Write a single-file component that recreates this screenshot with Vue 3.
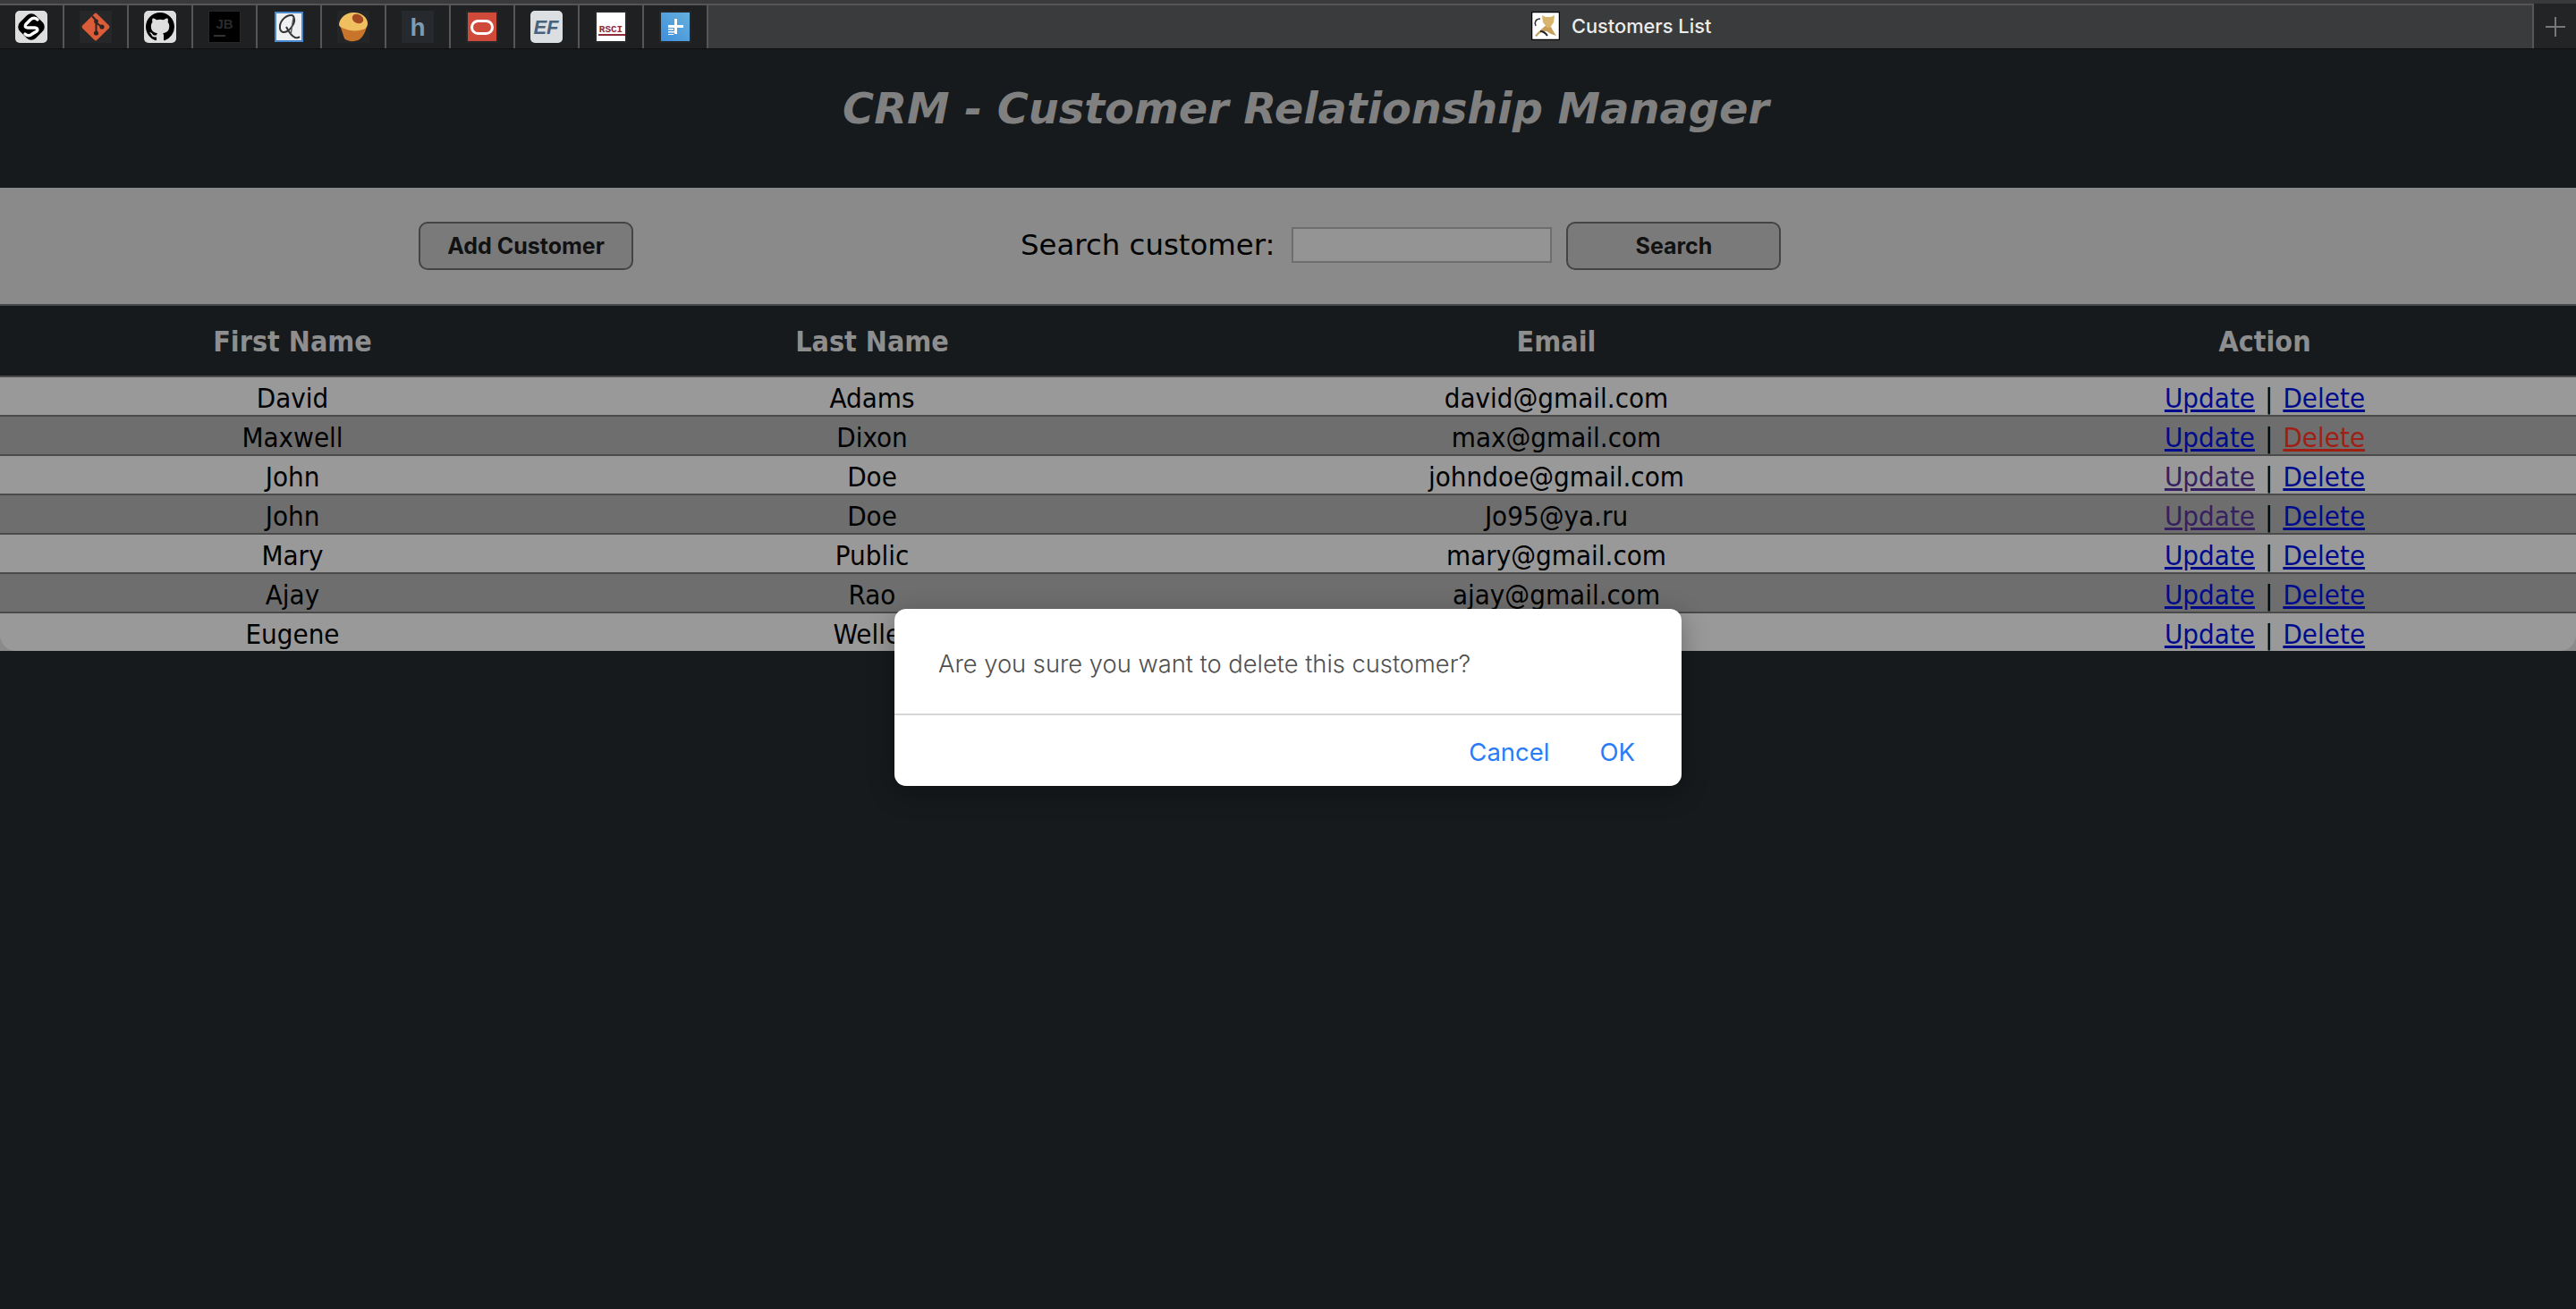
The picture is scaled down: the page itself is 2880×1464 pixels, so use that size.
<script setup>
const customers = [
  { first: 'David', last: 'Adams', email: 'david@gmail.com' },
  { first: 'Maxwell', last: 'Dixon', email: 'max@gmail.com', deleteHover: true },
  { first: 'John', last: 'Doe', email: 'johndoe@gmail.com', visited: true },
  { first: 'John', last: 'Doe', email: 'Jo95@ya.ru', visited: true },
  { first: 'Mary', last: 'Public', email: 'mary@gmail.com' },
  { first: 'Ajay', last: 'Rao', email: 'ajay@gmail.com' },
  { first: 'Eugene', last: 'Weller', email: 'eugene@gmail.com' }
]
</script>

<template>
  <div class="app">
    <div class="tabbar">
      <div class="tab">
        <svg viewBox="0 0 36 36" class="icon">
          <rect width="36" height="36" rx="5" fill="#dedede" />
          <rect x="5.500" y="5.500" width="25" height="25" rx="7" fill="#000" transform="rotate(45 18 18)" />
          <path d="M25 10Q21 6.500 17 10L12 15Q9.500 18.500 14 19H22Q26.500 19.500 24 23L19 26Q15 29.500 11 26" fill="none" stroke="#fff" stroke-width="3.400" stroke-linecap="round" />
        </svg>
      </div>
      <div class="tab">
        <svg viewBox="0 0 36 36" class="icon">
          <rect width="36" height="36" fill="#262729" />
          <rect x="6.500" y="6.500" width="23" height="23" rx="2" fill="#dc5c3a" transform="rotate(45 18 18)" />
          <path d="M14 6 18.500 11v13M18.500 13.500 25 18" fill="none" stroke="#2a2523" stroke-width="2" />
          <circle cx="18.500" cy="12" r="2.400" fill="#2a2523" />
          <circle cx="18.500" cy="25" r="2.600" fill="#2a2523" />
          <circle cx="25" cy="18" r="2.600" fill="#2a2523" />
        </svg>
      </div>
      <div class="tab">
        <svg viewBox="0 0 36 36" class="icon">
          <rect width="36" height="36" rx="5" fill="#dedede" />
          <g transform="translate(2 2)">
            <path fill="#000" d="M16 0C7.160 0 0 7.160 0 16c0 7.080 4.580 13.060 10.940 15.180.8.140 1.100-.34 1.100-.76 0-.38-.02-1.640-.02-2.980-4.020.74-5.060-.98-5.380-1.880-.18-.46-.96-1.880-1.640-2.260-.56-.3-1.360-1.040-.02-1.060 1.260-.02 2.160 1.160 2.460 1.640 1.440 2.420 3.740 1.740 4.660 1.320.14-1.040.56-1.740 1.020-2.140-3.560-.4-7.280-1.780-7.280-7.900 0-1.740.62-3.180 1.640-4.300-.16-.4-.72-2.040.16-4.240 0 0 1.340-.42 4.400 1.640 1.280-.36 2.640-.54 4-.54 1.360 0 2.720.18 4 .54 3.060-2.080 4.400-1.640 4.400-1.640.88 2.200.32 3.840.16 4.240 1.020 1.120 1.640 2.540 1.640 4.300 0 6.140-3.740 7.500-7.300 7.900.58.500 1.080 1.460 1.080 2.960 0 2.140-.02 3.860-.02 4.400 0 .42.300.92 1.100.76A16.026 16.026 0 0 0 32 16C32 7.160 24.840 0 16 0z" />
          </g>
        </svg>
      </div>
      <div class="tab">
        <svg viewBox="0 0 36 36" class="icon">
          <rect width="36" height="36" fill="#262729" />
          <rect x="1" y="1" width="34" height="34" fill="#000" />
          <text x="18" y="20" text-anchor="middle" class="jb">JB</text>
          <rect x="6" y="27" width="13" height="2" fill="#333" />
        </svg>
      </div>
      <div class="tab">
        <svg viewBox="0 0 36 36" class="icon">
          <rect x="3" y="2" width="30" height="32" fill="#eef0f2" stroke="#4a88d0" stroke-width="2" />
          <path d="M21 5C13 5 7 13 8 20c.6 4 4 5 8 3 5-3 9-10 8-14-.6-3-2-4-3-4ZM15 18c2 4 5 10 10 12 2 .6 4 0 5-1" fill="none" stroke="#333" stroke-width="2" />
          <path d="M23 8 20 27" fill="none" stroke="#555" stroke-width="1.500" />
        </svg>
      </div>
      <div class="tab">
        <svg viewBox="0 0 36 36" class="icon">
          <rect width="36" height="36" fill="#242527" />
          <path d="M3 16 8 31c4 4 12 4 17 1 4-3 7-9 8-15Z" fill="#c9742b" />
          <path d="M2 15C3 7 11 1 20 2c8 .6 14 6 14 12 0 4-2 6-5 7-6 2-15 2-21-1-3-1-6-2-6-5Z" fill="#f0c060" />
          <ellipse cx="23" cy="9" rx="6.500" ry="5" fill="#a34a22" transform="rotate(25 23 9)" />
        </svg>
      </div>
      <div class="tab">
        <svg viewBox="0 0 36 36" class="icon">
          <rect width="36" height="36" fill="#262a2e" />
          <text x="18" y="28" text-anchor="middle" class="h-mark">h</text>
        </svg>
      </div>
      <div class="tab">
        <svg viewBox="0 0 36 36" class="icon">
          <rect width="36" height="36" fill="#262729" />
          <rect x="2" y="2" width="32" height="32" fill="#cf4a38" />
          <rect x="6.500" y="11.500" width="23" height="14" rx="7" fill="none" stroke="#fff" stroke-width="3" />
        </svg>
      </div>
      <div class="tab">
        <svg viewBox="0 0 36 36" class="icon">
          <rect width="36" height="36" rx="5" fill="#dcdfe2" />
          <text x="17.500" y="26" text-anchor="middle" class="ef">EF</text>
        </svg>
      </div>
      <div class="tab">
        <svg viewBox="0 0 36 36" class="icon">
          <rect width="36" height="36" fill="#262729" />
          <rect x="2" y="2" width="32" height="32" fill="#fff" />
          <text x="18" y="24" text-anchor="middle" class="rsci">RSCI</text>
          <rect x="4" y="26" width="30" height="2" fill="#8e2c3c" />
        </svg>
      </div>
      <div class="tab">
        <svg viewBox="0 0 36 36" class="icon">
          <defs>
            <linearGradient id="blueFav" x1="0" y1="1" x2="1" y2="0">
              <stop offset="0" stop-color="#3f8fdc" />
              <stop offset="1" stop-color="#66b0dc" />
            </linearGradient>
          </defs>
          <rect width="36" height="36" fill="#262729" />
          <rect x="2" y="2" width="32" height="32" fill="url(#blueFav)" />
          <path d="M20 9v7h7v3h-7v7h-3v-7H10v-3h7V9Z" fill="#fff" />
          <path d="M10 20h6v1.500h-6ZM10 23h7v1.500h-7ZM10 26h6v1h-6Z" fill="#fff" />
        </svg>
      </div>

      <div class="active-tab">
        <svg viewBox="0 0 32 32" class="tomcat">
          <rect x="0.500" y="0.500" width="31" height="31" fill="#fff" stroke="#000" stroke-width="1.500" />
          <path d="M5 16c-2-4 0-8 5-8" fill="none" stroke="#333" stroke-width="1.500" />
          <path d="M4 27c4-5 8-8 13-12l4 0c2 4 4 8 7 12-4-1-8-3-11-5-5 0-8 2-11 6Z" fill="#c79f5c" />
          <path d="M12 4l4 2h6l4-2-1 8-4 6h-3l-5-6Z" fill="#d9b56c" />
          <path d="M10 22c3 0 6 2 8 5" fill="none" stroke="#222" stroke-width="2" />
        </svg>
        <span>Customers List</span>
      </div>
      <div class="new-tab">
        <svg viewBox="0 0 22 22" class="plus">
          <path d="M11 0v22M0 11h22" stroke="#777" stroke-width="2" />
        </svg>
      </div>
    </div>

    <div class="page">
      <h1 class="title">CRM - Customer Relationship Manager</h1>

      <div class="toolbar">
        <button class="btn">Add Customer</button>
        <label class="search-label">Search customer:</label>
        <input class="search-input" type="text" />
        <button class="btn search-btn">Search</button>
      </div>

      <div class="row head">
        <div>First Name</div>
        <div>Last Name</div>
        <div>Email</div>
        <div>Action</div>
      </div>
      <div class="rows">
        <div v-for="(c, i) in customers" :key="i" class="row item" :class="{ even: i % 2 === 1 }">
          <div>{{ c.first }}</div>
          <div>{{ c.last }}</div>
          <div>{{ c.email }}</div>
          <div>
            <a href="#" :class="{ visited: c.visited }">Update</a>
            <span class="sep">|</span>
            <a href="#" :class="{ hot: c.deleteHover }">Delete</a>
          </div>
        </div>
      </div>
    </div>

    <div class="overlay">
      <div class="dialog">
        <div class="dialog-body">Are you sure you want to delete this customer?</div>
        <div class="dialog-actions">
          <span class="dialog-btn">Cancel</span>
          <span class="dialog-btn">OK</span>
        </div>
      </div>
    </div>
  </div>
</template>

<style scoped>
.app {
  position: relative;
  width: 2880px;
  height: 1464px;
  overflow: hidden;
  background: #161a1d;
  font-family: "DejaVu Sans", sans-serif;
}
.tabbar {
  display: flex;
  height: 55px;
  box-sizing: border-box;
  background: #1f2022;
  border-top: 4px solid #3a3a3c;
  border-bottom: 1px solid #0e0f10;
  box-shadow: inset 0 2px 0 #565658;
}
.tab {
  width: 70px;
  flex: none;
  display: flex;
  align-items: center;
  justify-content: center;
  border-right: 2px solid #565658;
  padding-top: 2px;
}
.icon {
  width: 36px;
  height: 36px;
}
.jb {
  font: bold 15px "Liberation Sans", sans-serif;
  fill: #2b2b2b;
}
.h-mark {
  font: bold 28px "Liberation Sans", sans-serif;
  fill: #7d9bb2;
}
.ef {
  font: italic bold 22px "Liberation Sans", sans-serif;
  fill: #48627c;
}
.rsci {
  font: bold 11px "Liberation Mono", monospace;
  fill: #8e2c3c;
}
.active-tab {
  flex: 1;
  display: flex;
  align-items: center;
  background: #3a3b3d;
  padding-left: 920px;
  box-shadow: inset 0 2px 0 #565658;
  color: #ececec;
  font: 500 21.800px Inter, sans-serif;
}
.tomcat {
  width: 32px;
  height: 32px;
  margin-right: 13px;
}
.new-tab {
  width: 47px;
  flex: none;
  display: flex;
  align-items: center;
  justify-content: center;
  border-left: 2px solid #565658;
  background: #232426;
  padding-top: 2px;
}
.plus {
  width: 22px;
  height: 22px;
}
.page {
  display: flex;
  flex-direction: column;
}
.title {
  margin: 0;
  height: 155px;
  box-sizing: border-box;
  padding: 38px 0 0 40px;
  text-align: center;
  color: #808080;
  font-size: 47.800px;
  line-height: 58px;
  font-weight: bold;
  font-style: italic;
}
.toolbar {
  display: flex;
  align-items: center;
  height: 132px;
  box-sizing: border-box;
  padding: 0 0 0 468px;
  background: #8a8a8a;
  border-bottom: 2px solid #4a4a4a;
}
.btn {
  width: 240px;
  height: 54px;
  box-sizing: border-box;
  background: #7a7a7a;
  border: 2px solid #444;
  border-radius: 10px;
  color: #111;
  font: bold 25px Inter, sans-serif;
}
.search-label {
  margin-left: 433px;
  margin-bottom: 3px;
  color: #000;
  font-size: 32.400px;
}
.search-input {
  width: 291px;
  height: 40px;
  box-sizing: border-box;
  margin-left: 19px;
  margin-bottom: 2px;
  background: #949494;
  border: 2px solid #6e6e6e;
}
.search-btn {
  margin-left: 16px;
}
.row {
  display: grid;
  grid-template-columns: 654px 642px 888px 696px;
  align-items: center;
  text-align: center;
  font-stretch: condensed;
}
.head {
  height: 80px;
  box-sizing: border-box;
  padding-top: 2px;
  border-bottom: 2px solid #4a4a4a;
  color: #8e8e8e;
  font-size: 32px;
  font-weight: bold;
}
.rows {
  background: #8a8a8a;
}
.item {
  height: 44px;
  box-sizing: border-box;
  padding-top: 3px;
  border-bottom: 2px solid #4a4a4a;
  background: #999;
  color: #000;
  font-size: 31px;
  line-height: 40px;
}
.item.even {
  background: #6e6e6e;
}
.item:last-child {
  border-bottom: 0;
  height: 42px;
  border-bottom-left-radius: 18px;
  border-bottom-right-radius: 18px;
}
.item a {
  color: #000b8c;
}
.item a.visited {
  color: #36205f;
}
.item a.hot {
  color: #a01f14;
}
.sep {
  margin: 0 11px;
}
.overlay {
  position: absolute;
  inset: 0;
  display: flex;
  justify-content: center;
  align-items: flex-start;
  padding-top: 681px;
  box-sizing: border-box;
}
.dialog {
  width: 880px;
  height: 198px;
  background: #fff;
  border-radius: 13px;
  box-shadow: 0 8px 30px rgba(0, 0, 0, 0.3);
  font-family: Inter, sans-serif;
}
.dialog-body {
  height: 119px;
  box-sizing: border-box;
  padding: 44px 0 0 49px;
  border-bottom: 2px solid #d6d6d6;
  color: #505050;
  font-size: 27.300px;
  line-height: 36px;
  font-weight: 300;
}
.dialog-actions {
  display: flex;
  justify-content: flex-end;
  gap: 56px;
  padding: 23px 52px 0 0;
}
.dialog-btn {
  color: #2a7bf6;
  font-size: 27.500px;
  line-height: 36px;
}
</style>

<style>
html,
body {
  margin: 0;
  background: #161a1d;
}
</style>
